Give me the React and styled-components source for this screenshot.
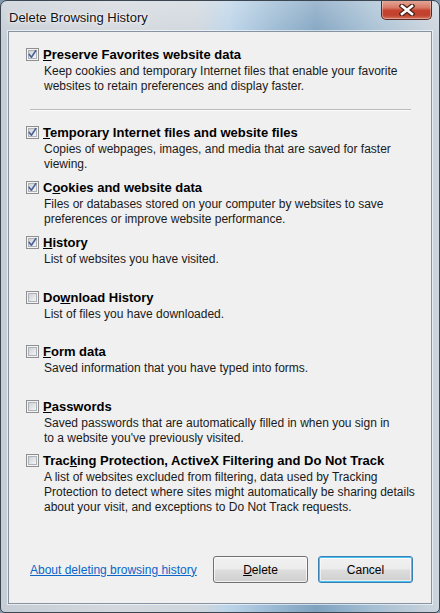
import styled, { createGlobalStyle } from "styled-components";

const Global = createGlobalStyle`
  html, body { margin: 0; padding: 0; }
  body { width: 440px; height: 613px; overflow: hidden; background: #7f97ad; }
`

const Window = styled.div`
  box-sizing: border-box;
  width: 440px;
  height: 613px;
  display: flex;
  flex-direction: column;
  border: 1px solid #3c4650;
  border-radius: 7px 7px 5px 5px;
  background:
    linear-gradient(180deg, rgba(255,255,255,0.25) 0%, rgba(255,255,255,0) 40px),
    linear-gradient(90deg, #c6cdd5 0%, #d3d8de 25%, #cfd6dd 45%, #bcd4e8 52%, #9bbad4 62%, #7fa2c0 72%, #a6bfd3 85%, #cdd5dd 100%);
  font-family: "Liberation Sans", Arial, sans-serif;
  overflow: hidden;
`

const TitleBar = styled.div`
  height: 30px;
  display: flex;
  align-items: flex-start;
  justify-content: space-between;
  padding: 0 7px 0 8px;
`

const Title = styled.div`
  font-size: 13px;
  color: #111;
  margin-top: 9px;
  text-shadow: 0 0 6px rgba(255,255,255,0.95), 0 0 2px rgba(255,255,255,0.9);
`

const CloseButton = styled.div`
  box-sizing: border-box;
  width: 51px;
  height: 20px;
  margin-top: -1px;
  border: 1px solid #5a2a20;
  border-top: none;
  border-radius: 0 0 5px 5px;
  background: linear-gradient(180deg, #e6ab9c 0%, #d77a67 40%, #c5432e 55%, #c0412d 80%, #d4725c 100%);
  box-shadow: inset 0 0 0 1px rgba(255,255,255,0.35);
  display: flex;
  align-items: center;
  justify-content: center;
`

const Client = styled.div`
  flex: 1;
  margin: 0 7px 8px 7px;
  border: 1px solid #8593a3;
  background: #f0f0f0;
  display: flex;
  flex-direction: column;
  padding: 14px 0 0 17px;
  box-shadow: 0 0 0 1px rgba(255,255,255,0.6);
`

const Group = styled.div`
  box-sizing: border-box;
  height: ${p => p.h || 55}px;
`

const Row = styled.label`
  display: flex;
  align-items: center;
  gap: 4px;
  height: 17px;
`

const Label = styled.span`
  font-size: 13px;
  font-weight: bold;
  color: #000;
  white-space: nowrap;
  u { text-decoration: underline; text-underline-offset: 1px; }
`

const Desc = styled.div`
  margin: 1px 0 0 18px;
  font-size: 12px;
  line-height: 15px;
  color: #1a1a1a;
  white-space: nowrap;
`

const Separator = styled.div`
  height: 1px;
  background: #b9b9b9;
  border-bottom: 1px solid #fcfcfc;
  margin: 14px 20px 13px 4px;
`

const Footer = styled.div`
  margin-top: auto;
  display: flex;
  align-items: center;
  padding: 0 18px 20px 4px;
`

const Link = styled.a`
  font-size: 12px;
  color: #0b66c8;
  text-decoration: underline;
  margin-right: auto;
  cursor: pointer;
`

const Button = styled.div`
  box-sizing: border-box;
  width: 95px;
  height: 27px;
  margin-left: 10px;
  border: 1px solid ${p => (p.focused ? "#3c7fb1" : "#707070")};
  border-radius: 3px;
  background: linear-gradient(180deg, #f2f2f2 0%, #ebebeb 48%, #dddddd 52%, #cfcfcf 100%);
  box-shadow: ${p => (p.focused ? "inset 0 0 0 1px #48c2f1, inset 0 0 0 2px rgba(255,255,255,0.6)" : "inset 0 0 0 1px rgba(255,255,255,0.7)")};
  display: flex;
  align-items: center;
  justify-content: center;
  font-size: 12px;
  color: #000;
  u { text-underline-offset: 1px; }
`

function CheckBox({ checked }) {
  return (
    <svg width="13" height="13" viewBox="0 0 13 13" style={{ flex: "none" }}>
      <defs>
        <linearGradient id="cbg" x1="0" y1="0" x2="1" y2="1">
          <stop offset="0" stopColor="#cbcfd5" />
          <stop offset="1" stopColor="#f7f7f7" />
        </linearGradient>
      </defs>
      <rect x="0.5" y="0.5" width="12" height="12" fill="#f4f4f4" stroke="#8f8f8f" />
      <rect x="2.5" y="2.5" width="8" height="8" fill="url(#cbg)" stroke="#aeb3b9" strokeWidth="1" />
      {checked && (
        <path d="M3.2 6.4 L5.4 9.2 L9.8 2.6" fill="none" stroke="#4a5f97" strokeWidth="1.6" strokeLinecap="round" strokeLinejoin="round" />
      )}
    </svg>
  )
}

function CloseGlyph() {
  return (
    <svg width="16" height="12" viewBox="0 0 16 12">
      <path d="M3 2 L13 10 M13 2 L3 10" stroke="#4a2218" strokeWidth="5" strokeLinecap="square" />
      <path d="M3 2 L13 10 M13 2 L3 10" stroke="#ffffff" strokeWidth="2.6" strokeLinecap="square" />
    </svg>
  )
}

function Item({ checked, label, children, h }) {
  return (
    <Group h={h}>
      <Row>
        <CheckBox checked={checked} />
        <Label>{label}</Label>
      </Row>
      <Desc>{children}</Desc>
    </Group>
  )
}

export default function App() {
  return <>
    <Global />
    <Window>
      <TitleBar>
        <Title>Delete Browsing History</Title>
        <CloseButton><CloseGlyph /></CloseButton>
      </TitleBar>
      <Client>
        <Item checked h={49} label={<><u>P</u>reserve Favorites website data</>}>
          Keep cookies and temporary Internet files that enable your favorite<br />
          websites to retain preferences and display faster.
        </Item>
        <Separator />
        <Item checked label={<><u>T</u>emporary Internet files and website files</>}>
          Copies of webpages, images, and media that are saved for faster<br />
          viewing.
        </Item>
        <Item checked label={<>C<u>o</u>okies and website data</>}>
          Files or databases stored on your computer by websites to save<br />
          preferences or improve website performance.
        </Item>
        <Item checked label={<><u>H</u>istory</>}>
          List of websites you have visited.
        </Item>
        <Item h={54} label={<>Do<u>w</u>nload History</>}>
          List of files you have downloaded.
        </Item>
        <Item label={<><u>F</u>orm data</>}>
          Saved information that you have typed into forms.
        </Item>
        <Item h={54} label={<><u>P</u>asswords</>}>
          Saved passwords that are automatically filled in when you sign in<br />
          to a website you've previously visited.
        </Item>
        <Item h={64} label={<>Trac<u>k</u>ing Protection, ActiveX Filtering and Do Not Track</>}>
          A list of websites excluded from filtering, data used by Tracking<br />
          Protection to detect where sites might automatically be sharing details<br />
          about your visit, and exceptions to Do Not Track requests.
        </Item>
        <Footer>
          <Link>About deleting browsing history</Link>
          <Button><span><u>D</u>elete</span></Button>
          <Button focused>Cancel</Button>
        </Footer>
      </Client>
    </Window>
  </>
}
